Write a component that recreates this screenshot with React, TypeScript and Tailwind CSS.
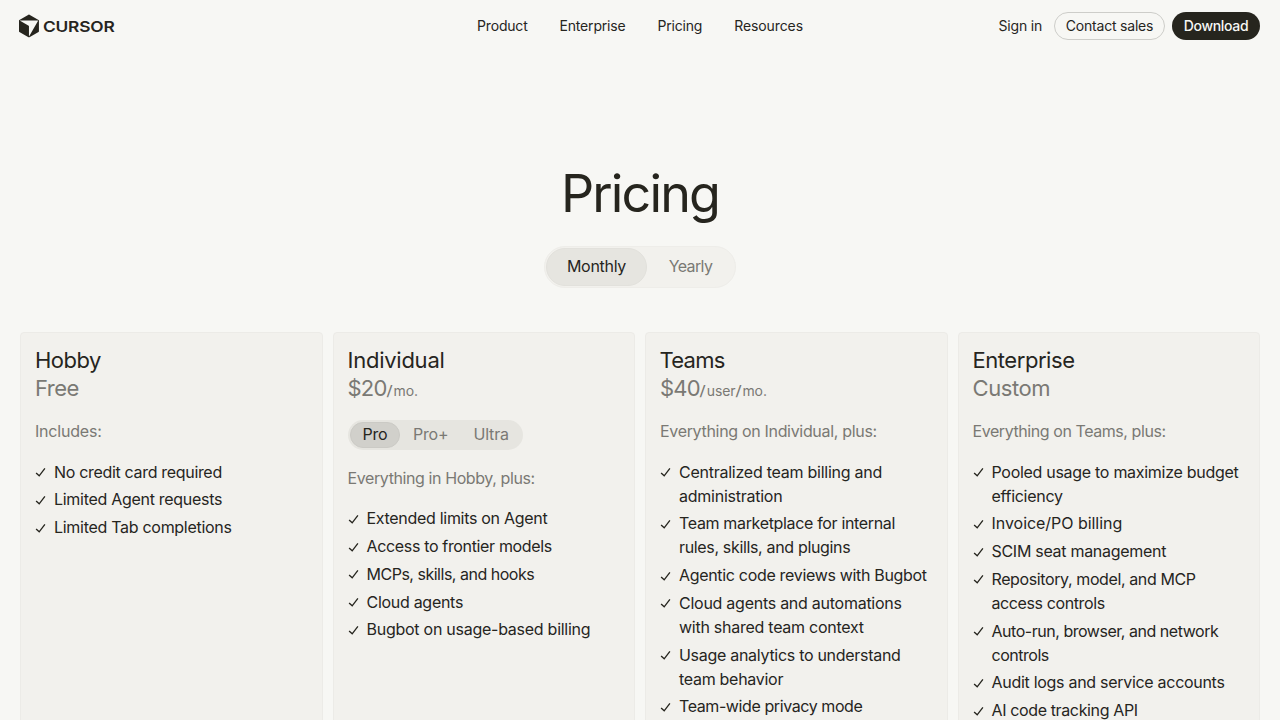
import { Fragment } from "react";
import type { ReactNode } from "react";

type Feature = { lines: string[]; className?: string };

type Plan = {
  name: string;
  nameClass: string;
  price: string;
  priceClass: string;
  units?: string[];
  tiers?: boolean;
  intro: string;
  introClass: string;
  features: Feature[];
};

const plans: Plan[] = [
  {
    name: "Hobby",
    nameClass: "tracking-[-0.5px]",
    price: "Free",
    priceClass: "tracking-[-0.5px]",
    intro: "Includes:",
    introClass: "tracking-[-0.2px]",
    features: [
      { lines: ["No credit card required"], className: "tracking-[-0.32px]" },
      { lines: ["Limited Agent requests"] },
      { lines: ["Limited Tab completions"] },
    ],
  },
  {
    name: "Individual",
    nameClass: "tracking-[-0.25px]",
    price: "$20",
    priceClass: "tracking-[-0.8px]",
    units: ["mo."],
    tiers: true,
    intro: "Everything in Hobby, plus:",
    introClass: "tracking-[-0.4px]",
    features: [
      { lines: ["Extended limits on Agent"], className: "tracking-[-0.3px]" },
      { lines: ["Access to frontier models"], className: "tracking-[-0.34px]" },
      { lines: ["MCPs, skills, and hooks"], className: "tracking-[-0.49px]" },
      { lines: ["Cloud agents"] },
      { lines: ["Bugbot on usage-based billing"], className: "tracking-[-0.26px]" },
    ],
  },
  {
    name: "Teams",
    nameClass: "-ml-[0.5px] tracking-[-0.7px]",
    price: "$40",
    priceClass: "tracking-[-0.8px]",
    units: ["user", "mo."],
    intro: "Everything on Individual, plus:",
    introClass: "tracking-[-0.32px]",
    features: [
      { lines: ["Centralized team billing and", "administration"], className: "tracking-[-0.25px]" },
      { lines: ["Team marketplace for internal", "rules, skills, and plugins"], className: "tracking-[-0.34px]" },
      { lines: ["Agentic code reviews with Bugbot"], className: "tracking-[-0.32px]" },
      { lines: ["Cloud agents and automations", "with shared team context"], className: "tracking-[-0.26px]" },
      { lines: ["Usage analytics to understand", "team behavior"] },
      { lines: ["Team-wide privacy mode"], className: "tracking-[-0.41px]" },
    ],
  },
  {
    name: "Enterprise",
    nameClass: "tracking-[-0.45px]",
    price: "Custom",
    priceClass: "tracking-[-0.4px]",
    intro: "Everything on Teams, plus:",
    introClass: "tracking-[-0.43px]",
    features: [
      { lines: ["Pooled usage to maximize budget", "efficiency"] },
      { lines: ["Invoice/PO billing"], className: "tracking-[-0.04px]" },
      { lines: ["SCIM seat management"] },
      { lines: ["Repository, model, and MCP", "access controls"], className: "tracking-[-0.39px]" },
      { lines: ["Auto-run, browser, and network", "controls"], className: "tracking-[-0.47px]" },
      { lines: ["Audit logs and service accounts"], className: "tracking-[-0.29px]" },
      { lines: ["AI code tracking API"], className: "tracking-[-0.37px]" },
    ],
  },
];

function Logo() {
  return (
    <a href="#" aria-label="Cursor" className="-ml-px flex">
      <svg width="100" height="28" viewBox="0 0 100 28" fill="currentColor">
        <g transform="translate(0 2.6) scale(0.0427)">
          <path d="M457.43,125.94L244.42,2.96c-6.84-3.95-15.28-3.95-22.12,0L9.3,125.94c-5.75,3.32-9.3,9.46-9.3,16.11v247.99c0,6.65,3.55,12.79,9.3,16.11l213.01,122.98c6.84,3.95,15.28,3.95,22.12,0l213.01-122.98c5.75-3.32,9.3-9.46,9.3-16.11v-247.99c0-6.65-3.55-12.79-9.3-16.11h-.01ZM444.05,151.99l-205.63,356.16c-1.39,2.4-5.06,1.42-5.06-1.36v-233.21c0-4.66-2.49-8.97-6.53-11.31L24.87,145.67c-2.4-1.39-1.42-5.06,1.36-5.06h411.26c5.84,0,9.49,6.33,6.57,11.39h-.01Z" />
        </g>
        <text
          x="24"
          y="19.7"
          textLength="71.5"
          lengthAdjust="spacingAndGlyphs"
          className="text-[15px] font-semibold"
        >
          CURSOR
        </text>
      </svg>
    </a>
  );
}

function Header() {
  return (
    <header className="flex h-[52px] shrink-0 items-center px-5 text-sm tracking-[-0.19px]">
      <div className="flex-1">
        <Logo />
      </div>
      <nav className="flex gap-8">
        <a href="#">Product</a>
        <a href="#">Enterprise</a>
        <a href="#">Pricing</a>
        <a href="#" className="tracking-[-0.1px]">Resources</a>
      </nav>
      <div className="flex flex-1 items-center justify-end tracking-[-0.2px]">
        <a href="#" className="mr-3">Sign in</a>
        <a
          href="#"
          className="mr-[7px] flex h-7 w-[111px] items-center justify-center rounded-full border border-[#cdcdc9]"
        >
          Contact sales
        </a>
        <a
          href="#"
          className="flex h-7 w-[88px] items-center justify-center rounded-full bg-[#26251e] font-medium tracking-[-0.3px] text-[#f7f7f4]"
        >
          Download
        </a>
      </div>
    </header>
  );
}

function Check() {
  return (
    <svg
      className="mt-[7.5px] h-[11px] w-[11px] shrink-0"
      viewBox="0 0 11 11"
      fill="none"
      stroke="currentColor"
      strokeWidth="1.35"
    >
      <path d="M1.1 5.9 L4.2 8.8 L9.9 1.3" />
    </svg>
  );
}

function TierTab({ active, className, children }: { active?: boolean; className: string; children: ReactNode }) {
  return (
    <button
      className={`flex h-[26px] items-center rounded-full pb-0.5 ${
        active ? "border border-[#cbcac5] bg-[#d1d0cb] text-[#26251e]" : "text-[#7a7974]"
      } ${className}`}
    >
      {children}
    </button>
  );
}

function PlanCard({ plan }: { plan: Plan }) {
  return (
    <section className="rounded border border-[#ecebe7] bg-[#f2f1ed] px-3.5 pt-[13px]">
      <h2 className={`text-[22px] leading-7 ${plan.nameClass}`}>{plan.name}</h2>
      <p className="flex items-baseline text-[22px] leading-7 text-[#7a7974]">
        <span className={plan.priceClass}>{plan.price}</span>
        {plan.units && (
          <span className="text-sm tracking-[-0.1px]">
            {plan.units.map((unit) => (
              <Fragment key={unit}>
                <span className="mr-[1.5px] ml-[0.5px] inline-block scale-x-130">/</span>
                {unit}
              </Fragment>
            ))}
          </span>
        )}
      </p>
      {plan.tiers && (
        <div className="mt-[18px] -mb-px flex h-[30px] w-[175px] rounded-full bg-[#e6e5e0] p-0.5 tracking-[-0.2px]">
          <TierTab active className="w-[50px] pl-3">Pro</TierTab>
          <TierTab className="w-[60px] pl-[13.5px]">Pro+</TierTab>
          <TierTab className="w-[61px] pl-3.5">Ultra</TierTab>
        </div>
      )}
      <p className={`mt-[17px] leading-6 text-[#7a7974] ${plan.introClass}`}>{plan.intro}</p>
      <ul className={`flex flex-col gap-[3.75px] ${plan.tiers ? "mt-[16.3px]" : "mt-[16.7px]"}`}>
        {plan.features.map((feature) => (
          <li key={feature.lines[0]} className="flex gap-2 leading-6">
            <Check />
            <span className={`whitespace-nowrap ${feature.className ?? "tracking-[-0.29px]"}`}>
              {feature.lines.map((line, i) => (
                <Fragment key={line}>
                  {i > 0 && <br />}
                  {line}
                </Fragment>
              ))}
            </span>
          </li>
        ))}
      </ul>
    </section>
  );
}

export default function App() {
  return (
    <div className="flex h-screen flex-col overflow-hidden bg-[#f7f7f4] font-['Inter','Liberation_Sans',sans-serif] text-base text-[#26251e]">
      <Header />
      <main className="flex flex-1 flex-col items-center">
        <h1 className="mt-[111px] text-[52px] leading-[62px] tracking-[-1.87px]">Pricing</h1>
        <div className="mt-[21px] flex h-[42px] w-48 shrink-0 rounded-full border border-[#eeede9] bg-[#f2f1ed] p-px tracking-[-0.3px]">
          <button className="h-[38px] w-[101px] rounded-full border border-[#e2e1dc] bg-[#e6e5e0] pb-0.5">Monthly</button>
          <button className="h-[38px] w-[87px] pb-0.5 tracking-[-0.6px] text-[#7a7974]">Yearly</button>
        </div>
        <div className="mt-11 grid min-h-[440px] w-full flex-1 grid-cols-4 gap-2.5 px-5">
          {plans.map((plan) => (
            <PlanCard key={plan.name} plan={plan} />
          ))}
        </div>
      </main>
    </div>
  );
}
